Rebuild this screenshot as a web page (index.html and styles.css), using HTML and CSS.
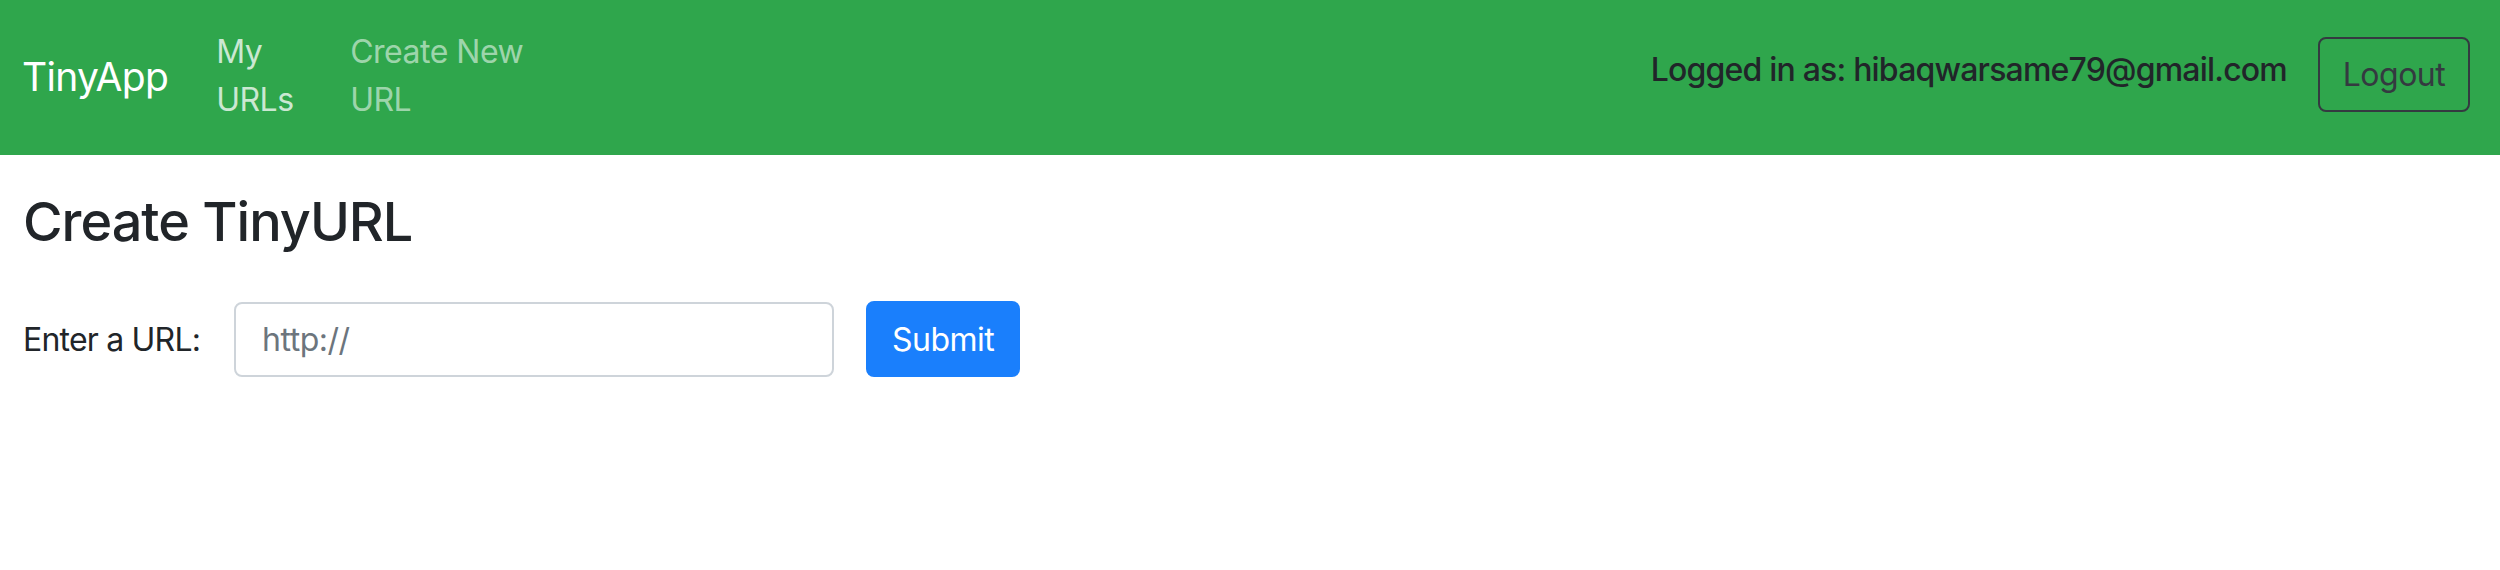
FILE: index.html
```html
<!DOCTYPE html>
<html lang="en">
<head>
<meta charset="utf-8">
<title>TinyApp</title>
<link rel="stylesheet" href="styles.css">
</head>
<body>
<nav class="navbar">
  <a class="brand" href="#">TinyApp</a>
  <ul class="nav-links">
    <li class="nav-item item-urls"><a class="nav-link active" href="#">My URLs</a></li>
    <li class="nav-item item-new"><a class="nav-link" href="#">Create New URL</a></li>
  </ul>
  <div class="nav-right">
    <span class="user">Logged in as: hibaqwarsame79@gmail.com</span>
    <button class="btn-logout" type="button">Logout</button>
  </div>
</nav>
<main class="content">
  <h2 class="title">Create TinyURL</h2>
  <form class="url-form">
    <label class="label" for="url">Enter a URL:</label>
    <input class="input" id="url" type="text" placeholder="http://">
    <button class="btn-submit" type="submit">Submit</button>
  </form>
</main>
</body>
</html>
```

FILE: styles.css
```css
* { box-sizing: border-box; }

body {
  margin: 0;
  font-family: "Inter", "Liberation Sans", sans-serif;
  color: #212529;
  background: #ffffff;
  letter-spacing: -0.5px;
}

.navbar {
  display: flex;
  align-items: center;
  height: 155px;
  padding: 0 30px 0 22px;
  background: #2fa64c;
}

.brand {
  font-size: 39px;
  color: #ffffff;
  text-decoration: none;
  margin-right: 48px;
  line-height: 1.2;
  letter-spacing: -0.7px;
}

.nav-links {
  display: flex;
  list-style: none;
  margin: 0;
  padding: 0 0 4px 0;
}

.item-urls { width: 134px; }
.item-new { width: 200px; }

.nav-link {
  display: block;
  font-size: 32px;
  line-height: 48px;
  text-decoration: none;
  color: rgba(255, 255, 255, 0.55);
}

.nav-link.active {
  color: rgba(255, 255, 255, 0.75);
}

.item-urls .nav-link { width: 100px; }
.item-new .nav-link { width: 185px; }

.nav-right {
  margin-left: auto;
  display: flex;
  align-items: center;
}

.user {
  font-size: 32px;
  font-weight: 500;
  line-height: 48px;
  letter-spacing: -0.8px;
  color: #212529;
  margin-right: 31px;
  margin-bottom: 16px;
}

.btn-logout {
  width: 152px;
  height: 75px;
  margin-bottom: 6px;
  font-family: inherit;
  font-size: 32px;
  letter-spacing: -0.5px;
  color: #343a40;
  background: transparent;
  border: 2px solid #343a40;
  border-radius: 8px;
}

.content {
  padding: 0 23px;
}

.title {
  margin: 34px 0 0 0;
  font-size: 54px;
  font-weight: 500;
  line-height: 65px;
  letter-spacing: -1px;
}

.url-form {
  display: flex;
  align-items: center;
  margin-top: 47px;
}

.label {
  font-size: 32px;
  margin-right: 34px;
  letter-spacing: -0.8px;
}

.input {
  width: 600px;
  height: 75px;
  padding: 0 26px;
  font-family: inherit;
  font-size: 32px;
  letter-spacing: -0.5px;
  color: #495057;
  border: 2px solid #ced4da;
  border-radius: 8px;
  margin-right: 32px;
}

.input::placeholder { color: #6c757d; }

.btn-submit {
  width: 154px;
  height: 76px;
  font-family: inherit;
  font-size: 32px;
  letter-spacing: -0.5px;
  color: #ffffff;
  background: #1a7ffc;
  border: none;
  border-radius: 8px;
}
```
